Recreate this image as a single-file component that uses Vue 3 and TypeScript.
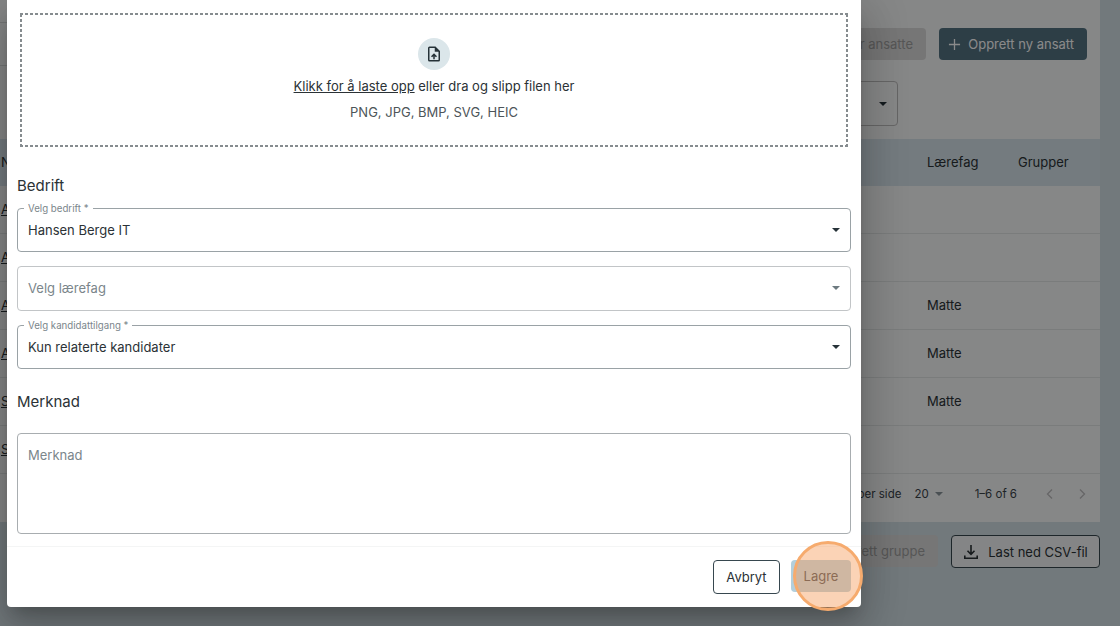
<script setup lang="ts">
interface Field {
  label?: string
  value: string
  placeholder?: boolean
}

const fields: Field[] = [
  { label: 'Velg bedrift *', value: 'Hansen Berge IT' },
  { value: 'Velg lærefag', placeholder: true },
  { label: 'Velg kandidattilgang *', value: 'Kun relaterte kandidater' },
]

const rows = [
  { name: 'A', subject: '' },
  { name: 'A', subject: '' },
  { name: 'A', subject: 'Matte' },
  { name: 'A', subject: 'Matte' },
  { name: 'S', subject: 'Matte' },
  { name: 'S', subject: '' },
]
</script>

<template>
  <div class="page">
    <!-- bakgrunnssiden -->
    <div class="card">
      <div class="header">
        <div class="tabs"></div>
        <div class="actions">
          <button class="btn ghost">Importer ansatte</button>
          <button class="btn dark">
            <svg width="13" height="13" viewBox="0 0 14 14"><path d="M7 1v12M1 7h12" stroke="currentColor" stroke-width="1.4" fill="none" /></svg>
            Opprett ny ansatt
          </button>
        </div>
      </div>
      <div class="filter-row">
        <div class="filter"><span class="caret"></span></div>
      </div>
      <div class="thead">
        <span class="col-name">N</span>
        <span class="col-subject">Lærefag</span>
        <span class="col-group">Grupper</span>
      </div>
      <div v-for="(row, i) in rows" :key="i" class="row">
        <span class="col-name link">{{ row.name }}</span>
        <span class="col-subject">{{ row.subject }}</span>
      </div>
      <div class="pager">
        <span>Rader per side</span>
        <span class="pager-size">20 <span class="caret small"></span></span>
        <span class="pager-count">1–6 of 6</span>
        <svg class="chev" width="12" height="12" viewBox="0 0 12 12"><path d="M8 1.500 3.500 6 8 10.500" stroke="currentColor" stroke-width="1.3" fill="none" /></svg>
        <svg class="chev" width="12" height="12" viewBox="0 0 12 12"><path d="M4 1.500 8.500 6 4 10.500" stroke="currentColor" stroke-width="1.3" fill="none" /></svg>
      </div>
    </div>
    <div class="bottom-actions">
      <button class="btn ghost">Opprett gruppe</button>
      <button class="btn outline">
        <svg width="16" height="16" viewBox="0 0 16 16" fill="none" stroke="currentColor" stroke-width="1.6">
          <path d="M8 1v9M4.500 6.800 8 10.300l3.500-3.500M1.800 11.500v2.700h12.400v-2.700" />
        </svg>
        Last ned CSV-fil
      </button>
    </div>

    <!-- dialog -->
    <div class="scrim"></div>
    <div class="modal">
      <div class="modal-body">
        <div class="dropzone">
          <div class="upload-icon">
            <svg width="18" height="18" viewBox="0 0 24 24">
              <path fill="#263238" d="M14 2H6a2 2 0 0 0-2 2v16a2 2 0 0 0 2 2h12a2 2 0 0 0 2-2V8l-6-6Zm4 18H6V4h7v5h5v11Z" />
              <path fill="#263238" d="M8 15.010l1.410 1.410L11 14.840V19h2v-4.160l1.590 1.590L16 15.010 12.010 11 8 15.010Z" />
            </svg>
          </div>
          <p class="drop-line"><span class="drop-link">Klikk for å laste opp</span> eller dra og slipp filen her</p>
          <p class="drop-types">PNG, JPG, BMP, SVG, HEIC</p>
        </div>

        <h3 class="section first">Bedrift</h3>
        <div class="fields">
          <div v-for="f in fields" :key="f.value" class="select" :class="{ labelled: f.label }">
            <span v-if="f.label" class="float-label">{{ f.label }}</span>
            <span :class="{ placeholder: f.placeholder }">{{ f.value }}</span>
            <span class="caret" :class="{ muted: f.placeholder }"></span>
          </div>
        </div>

        <h3 class="section second">Merknad</h3>
        <div class="textarea">Merknad</div>
      </div>
      <div class="modal-footer">
        <button class="btn outline cancel">Avbryt</button>
        <button class="btn save">Lagre</button>
      </div>
    </div>

    <div class="highlight"></div>
  </div>
</template>

<style>
html, body { margin: 0; }
</style>

<style scoped>
.page {
  position: relative;
  width: 1120px;
  height: 626px;
  overflow: hidden;
  box-sizing: border-box;
  padding-right: 20px;
  background: #d3e0e5;
  font-family: Inter, "Liberation Sans", sans-serif;
  font-size: 13px;
  color: #2b3236;
}

.card {
  background: #f8f9fa;
  height: 522px;
  display: flex;
  flex-direction: column;
}

.header {
  height: 60px;
  display: flex;
  justify-content: space-between;
  align-items: flex-start;
}

.tabs {
  width: 120px;
  height: 44px;
  margin-top: 22px;
  box-sizing: border-box;
  border-top: 1px solid #d9dcdd;
  border-bottom: 1px solid #d9dcdd;
}

.actions {
  display: flex;
  gap: 13px;
  padding: 28px 13px 0 0;
}

.btn {
  height: 32px;
  border-radius: 4px;
  border: 0;
  font: inherit;
  white-space: nowrap;
  display: inline-flex;
  align-items: center;
  justify-content: center;
  gap: 6px;
  padding: 0;
}

.ghost {
  background: #dadada;
  color: #a0a0a0;
  padding: 0 13px;
}

.dark {
  background: #537382;
  color: #fff;
  width: 148px;
  gap: 7px;
  justify-content: flex-end;
  padding-right: 13px;
}

.filter-row {
  display: flex;
  justify-content: flex-end;
  padding: 21px 202px 0 0;
}

.filter {
  width: 100px;
  height: 45px;
  box-sizing: border-box;
  border: 1px solid #bdbdbd;
  border-radius: 4px;
  display: flex;
  align-items: center;
  justify-content: flex-end;
  padding-right: 10px;
}

.thead {
  margin-top: 13px;
  height: 47px;
  box-sizing: border-box;
  padding-bottom: 2px;
  background: #d6e4ea;
  display: flex;
  align-items: center;
}

.row {
  height: 48px;
  box-sizing: border-box;
  padding-bottom: 2px;
  border-bottom: 1px solid #e2e5e6;
  display: flex;
  align-items: center;
  flex-shrink: 0;
}

.col-name {
  width: 927px;
  padding-left: 1px;
  box-sizing: border-box;
}

.col-subject {
  width: 91px;
}

.link {
  text-decoration: underline;
}

.pager {
  flex: 1;
  display: flex;
  align-items: center;
  justify-content: flex-end;
  padding: 0 12px 8px 0;
  font-size: 11.500px;
  color: #3a4449;
}

.pager-size {
  margin-left: 13px;
  display: inline-flex;
  align-items: center;
  gap: 6px;
}

.pager-count {
  margin: 0 27px 0 32px;
}

.chev {
  color: #bdbdbd;
}

.chev + .chev {
  margin-left: 20px;
}

.bottom-actions {
  display: flex;
  justify-content: flex-end;
  gap: 13px;
  margin-top: 13px;
}

.outline {
  background: #fff;
  border: 1px solid #37474f;
  color: #2b3236;
}

.bottom-actions .outline {
  background: #f4f6f7;
  height: 33px;
  width: 149px;
  gap: 9px;
}

.caret {
  width: 0;
  height: 0;
  border-left: 4.500px solid transparent;
  border-right: 4.500px solid transparent;
  border-top: 4.500px solid #263238;
  margin-left: auto;
}

.caret.muted {
  border-top-color: #6d7a80;
}

.caret.small {
  border-top-color: #8a9499;
}

.scrim {
  position: absolute;
  inset: 0;
  background: rgba(0, 0, 0, 0.46);
}

.modal {
  position: absolute;
  left: 7px;
  top: 0;
  width: 854px;
  height: 607px;
  background: #fff;
  border-radius: 0 0 4px 4px;
  display: flex;
  flex-direction: column;
  box-shadow: 0 11px 15px -7px rgba(0, 0, 0, 0.2), 0 24px 38px 3px rgba(0, 0, 0, 0.14), 0 9px 46px 8px rgba(0, 0, 0, 0.12);
}

.modal-body {
  flex: 1;
  padding: 13px 10px 0;
}

.dropzone {
  margin: 0 3px;
  height: 134px;
  box-sizing: border-box;
  background:
    repeating-linear-gradient(90deg, #868c8f 0 3px, transparent 3px 5px) top / 100% 2px no-repeat,
    repeating-linear-gradient(90deg, #868c8f 0 3px, transparent 3px 5px) bottom / 100% 2px no-repeat,
    repeating-linear-gradient(0deg, #868c8f 0 3px, transparent 3px 5px) left / 2px 100% no-repeat,
    repeating-linear-gradient(0deg, #868c8f 0 3px, transparent 3px 5px) right / 2px 100% no-repeat;
  display: flex;
  flex-direction: column;
  align-items: center;
  padding-top: 25px;
}

.upload-icon {
  width: 32px;
  height: 32px;
  border-radius: 50%;
  background: #dbe6ea;
  display: flex;
  align-items: center;
  justify-content: center;
}

.drop-line {
  margin: 6px 0 0;
  line-height: 20px;
}

.drop-link {
  text-decoration: underline;
}

.drop-types {
  margin: 6px 0 0;
  line-height: 20px;
  color: #4d5559;
}

.section {
  margin: 0;
  font-size: 15px;
  font-weight: 400;
  line-height: 20px;
  color: #2b3236;
}

.section.first {
  margin-top: 28.500px;
}

.section.second {
  margin-top: 22.500px;
}

.fields {
  margin-top: 12px;
  display: flex;
  flex-direction: column;
  gap: 14px;
}

.select {
  position: relative;
  height: 44.500px;
  box-sizing: border-box;
  border: 1px solid #c2c5c7;
  border-radius: 4px;
  display: flex;
  align-items: center;
  padding: 0 10px;
}

.select.labelled {
  border-color: #9aa2a6;
}

.float-label {
  position: absolute;
  left: 6px;
  top: -7px;
  padding: 0 4px;
  background: #fff;
  font-size: 9.700px;
  line-height: 13px;
  color: #7b868b;
}

.placeholder {
  color: #7b868b;
}

.textarea {
  margin-top: 21.500px;
  height: 101px;
  box-sizing: border-box;
  border: 1px solid #a8adb0;
  border-radius: 4px;
  padding: 11px 10px;
  line-height: 20px;
  color: #7b868b;
}

.modal-footer {
  height: 61px;
  box-sizing: border-box;
  border-top: 1px solid #f4f5f5;
  display: flex;
  justify-content: flex-end;
  align-items: flex-start;
  gap: 11px;
  padding: 13px 10px 0 0;
}

.cancel {
  width: 67px;
  height: 34px;
}

.save {
  width: 60px;
  height: 32px;
  background: #b3cfdc;
  color: #3e4c58;
}

.highlight {
  position: absolute;
  left: 793px;
  top: 541px;
  width: 70px;
  height: 70px;
  box-sizing: border-box;
  border: 3px solid #f6ab6e;
  border-radius: 50%;
  background: rgba(246, 150, 80, 0.42);
}
</style>
